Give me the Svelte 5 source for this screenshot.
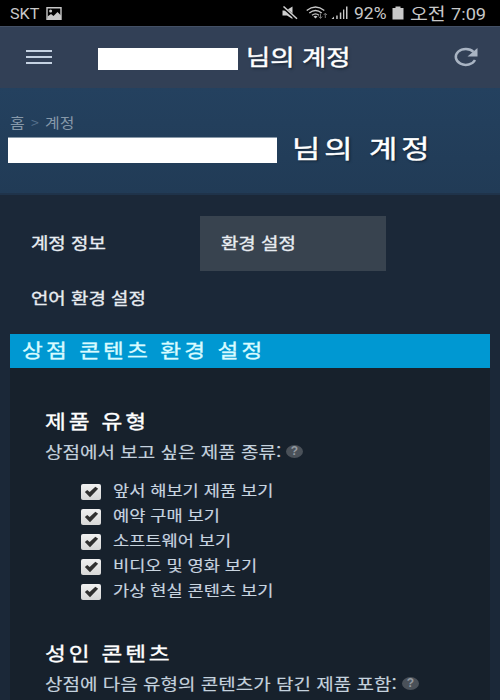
<script>
  const tabs = [
    { label: '계정 정보', active: false },
    { label: '환경 설정', active: true },
    { label: '언어 환경 설정', active: false }
  ];

  let products = $state([
    { label: '앞서 해보기 제품 보기', checked: true },
    { label: '예약 구매 보기', checked: true },
    { label: '소프트웨어 보기', checked: true },
    { label: '비디오 및 영화 보기', checked: true },
    { label: '가상 현실 콘텐츠 보기', checked: true }
  ]);
</script>

<div class="screen" lang="ko">
  <div class="status">
    <span class="carrier">SKT</span>
    <svg class="picture" width="16" height="13" viewBox="0 0 16 13">
      <path d="M1 .7H15V12.3H1Z" fill="none" stroke="#c8c8c8" stroke-width="1.4" />
      <circle cx="4.6" cy="4" r="1.5" fill="#c8c8c8" />
      <path d="M1.500 12V9.500L5 7l2.500 2L11.500 5 15 8.500V12Z" fill="#c8c8c8" />
    </svg>
    <div class="indicators">
      <svg class="mute" width="16" height="14" viewBox="0 0 16 14">
        <path d="M.5 4.500H4L10.500.5V13L5 9.500H.5Z" fill="#d0d0d0" />
        <path d="M.5.5 15 13.500" stroke="#000" stroke-width="3" />
        <path d="M1.500.5 15 12.800" stroke="#d0d0d0" stroke-width="1.500" />
      </svg>
      <svg class="wifi" width="22" height="14" viewBox="0 0 22 14">
        <g fill="none" stroke="#c8c8c8" stroke-width="1.300">
          <path d="M.7 4.500Q9.500-2.500 18.300 4.500" />
          <path d="M3.300 7Q9.500 2 15.700 7" />
          <path d="M6 9.300Q9.500 6.500 13 9.300" />
        </g>
        <path d="M7.500 10.500Q9.500 9 11.500 10.500L9.500 12.500Z" fill="#c8c8c8" />
        <path d="M14.500 7.500V12M12.800 10.500 14.500 12.500 16.200 10.500M19.300 12V7.500M17.700 9 19.300 7.200 21 9" fill="none" stroke="#777" />
      </svg>
      <svg class="signal" width="17" height="14" viewBox="0 0 17 14">
        <path d="M.5 13 3 10.500V13ZM5.200 9.500H6.700V13H5.200ZM8.800 6.500H10.300V13H8.800ZM12 3.500H13.300V13H12ZM15 .5H16.500V13H15Z" fill="#c8c8c8" />
      </svg>
      <span class="percent">92%</span>
      <svg class="battery" width="12" height="14" viewBox="0 0 12 14">
        <path d="M.5 2H3.500V.5H8.500V2H11.500V13.500H.5Z" fill="#c8c8c8" />
      </svg>
      <span class="meridiem">오전</span>
      <span class="clock">7:09</span>
    </div>
  </div>

  <header>
    <div class="menu"><i></i><i></i><i></i></div>
    <div class="name-mask"></div>
    <span class="title">님의 계정</span>
    <svg class="reload" width="26" height="22" viewBox="0 0 26 22">
      <path d="M20.500 4.800A10 8 0 1 0 22 13" fill="none" stroke="#a9b4c3" stroke-width="2.500" />
      <path d="M24.500 1V9.500H14.500Z" fill="#a9b4c3" />
    </svg>
  </header>

  <section class="hero">
    <div class="crumbs"><span>홈</span><b>&gt;</b><span>계정</span></div>
    <div class="account">
      <div class="account-mask"></div>
      <h1>님의 계정</h1>
    </div>
  </section>

  <nav>
    {#each tabs as tab}
      <div class="tab" class:active={tab.active}><span>{tab.label}</span></div>
    {/each}
  </nav>

  <main>
    <h2><span>상점 콘텐츠 환경 설정</span></h2>
    <div class="panel">
      <h3><span>제품 유형</span></h3>
      <div class="hint">
        <span class="hint-products">상점에서 보고 싶은 제품 종류:</span>
        <em>?</em>
      </div>
      <ul>
        {#each products as product}
          <li onclick={() => (product.checked = !product.checked)}>
            <div class="box">
              {#if product.checked}
                <svg width="15" height="12" viewBox="0 0 14 11">
                  <path d="M.8 5.600 3 3.600 5.300 5.400 10.600.6 13.200 2.500 5.600 10.300Z" fill="#303030" />
                </svg>
              {/if}
            </div>
            <span>{product.label}</span>
          </li>
        {/each}
      </ul>
      <h3><span>성인 콘텐츠</span></h3>
      <div class="hint">
        <span class="hint-adult">상점에 다음 유형의 콘텐츠가 담긴 제품 포함:</span>
        <em>?</em>
      </div>
    </div>
  </main>
</div>

<style>
  :global(body) {
    background: #1b2838;
  }

  .screen {
    width: 500px;
    height: 700px;
    overflow: hidden;
    background: #1b2838;
    color: #e8edf2;
    font-family: "Noto Sans CJK KR", sans-serif;
    white-space: nowrap;
  }

  span, h1, em {
    display: block;
    flex: none;
    transform-origin: 0 50%;
  }

  h1, h2, h3, ul {
    margin: 0;
    padding: 0;
    font-weight: 400;
  }

  svg {
    display: block;
    flex: none;
  }

  .status {
    display: flex;
    align-items: center;
    height: 26px;
    padding: 0 14px 0 10px;
    background: #000;
    color: #c8c8c8;
    font: 15.5px/26px Roboto, "Noto Sans CJK KR", sans-serif;
  }

  .carrier {
    width: 36px;
    transform: translateY(1px) scaleX(1.04);
  }

  .indicators {
    display: flex;
    align-items: center;
    margin-left: auto;
  }

  .mute {
    margin-right: 8px;
  }

  .wifi {
    margin-right: 3px;
  }

  .signal {
    margin-right: 6px;
  }

  .percent {
    width: 38px;
    font-size: 16.5px;
    transform: translateY(1px) scaleX(1.06);
  }

  .battery {
    margin-right: 6px;
  }

  .meridiem {
    width: 41px;
    font-size: 17px;
    transform: translateY(1px) scaleX(1.14);
  }

  .clock {
    width: 35px;
    font-size: 17px;
    transform: translateY(1px) scaleX(1.07);
  }

  header {
    display: flex;
    align-items: center;
    height: 62px;
    padding: 0 21px 0 26px;
    box-sizing: border-box;
    background: #324056;
    border-top: 1px solid #435065;
  }

  .menu {
    display: flex;
    flex-direction: column;
    gap: 4px;
    width: 26px;
    margin: 0 46px 2px 0;
  }

  .menu i {
    height: 2px;
    background: #c5d2e2;
  }

  .name-mask {
    width: 140px;
    height: 22px;
    margin: 3px 8px 0 0;
    background: #fff;
  }

  .title {
    margin-bottom: 5px;
    font-size: 22px;
    line-height: 30px;
    color: #fff;
    text-shadow: 1px 2px 2px #1b2838;
    -webkit-text-stroke: 0.4px;
    transform: scaleX(1.2);
  }

  .reload {
    margin-left: auto;
  }

  .hero {
    height: 107px;
    padding: 24px 0 0 8px;
    box-sizing: border-box;
    background: linear-gradient(#24415f, #213b56);
    border-bottom: 2px solid #1f334a;
  }

  .crumbs {
    display: flex;
    height: 21px;
    padding-left: 2px;
    font-size: 14px;
    line-height: 20px;
    color: #8698a9;
  }

  .crumbs b {
    width: 14px;
    margin-left: 8px;
    font-weight: 400;
    color: #56718d;
  }

  .crumbs span {
    transform: scaleX(1.14);
  }

  .account {
    display: flex;
    align-items: center;
    height: 32px;
  }

  .account-mask {
    width: 269px;
    height: 25px;
    margin: 1px 15px 0 0;
    background: #fff;
    border-top: 1px solid #8999a9;
    box-sizing: content-box;
  }

  h1 {
    margin-bottom: 4px;
    font-size: 25px;
    line-height: 32px;
    letter-spacing: 3.2px;
    color: #fff;
    text-shadow: 1px 1px 2px #0c1a2a;
    -webkit-text-stroke: 0.4px;
    transform: scaleX(1.23);
  }

  nav {
    display: grid;
    grid-template-columns: 185px 186px;
    grid-auto-rows: 55px;
    column-gap: 5px;
    padding: 21px 0 0 10px;
    height: 139px;
    box-sizing: border-box;
  }

  .tab {
    padding-left: 21px;
    font-size: 16px;
    line-height: 52px;
  }

  .tab.active {
    background: #38434f;
  }

  .tab span {
    width: max-content;
    -webkit-text-stroke: 0.35px;
    transform: scaleX(1.18);
  }

  main {
    padding: 0 10px;
  }

  h2 {
    height: 34px;
    padding-left: 12px;
    background: #0098d2;
    font-size: 19px;
    line-height: 31px;
    letter-spacing: 2.6px;
    color: #d8fbff;
  }

  h2 span,
  h3 span {
    width: max-content;
    -webkit-text-stroke: 0.35px;
    transform: scaleX(1.19);
  }

  .panel {
    height: 340px;
    padding: 36px 35px 0;
    background: #17212c;
  }

  h3 {
    height: 34px;
    font-size: 19px;
    line-height: 34px;
    letter-spacing: 2.4px;
    color: #fff;
  }

  .hint {
    display: flex;
    align-items: center;
    height: 27px;
    font-size: 16px;
    color: #c5d2de;
  }

  .hint span {
    margin-bottom: 2px;
    -webkit-text-stroke: 0.15px;
    transform: scaleX(1.187);
  }

  .hint-products {
    width: 241px;
  }

  .hint-adult {
    width: 357px;
  }

  .hint em {
    width: 17px;
    height: 13px;
    margin-bottom: 1px;
    border-radius: 50%;
    background: #4a5159;
    font: bold 12px/13px "Liberation Sans", sans-serif;
    text-align: center;
    color: #9299a0;
  }

  ul {
    height: 171px;
    padding: 13px 0 0 36px;
    box-sizing: border-box;
    list-style: none;
  }

  li {
    display: flex;
    align-items: center;
    height: 25.1px;
    font-size: 15px;
    color: #c9d5e0;
  }

  li span {
    line-height: 25px;
    -webkit-text-stroke: 0.15px;
    transform: translateY(-1px) scaleX(1.172);
  }

  .box {
    display: grid;
    place-items: center;
    width: 20px;
    height: 16px;
    margin: 2px 12px 0 0;
    border-radius: 2px;
    background: linear-gradient(#f0f0f0, #d8d8d8);
  }
</style>
